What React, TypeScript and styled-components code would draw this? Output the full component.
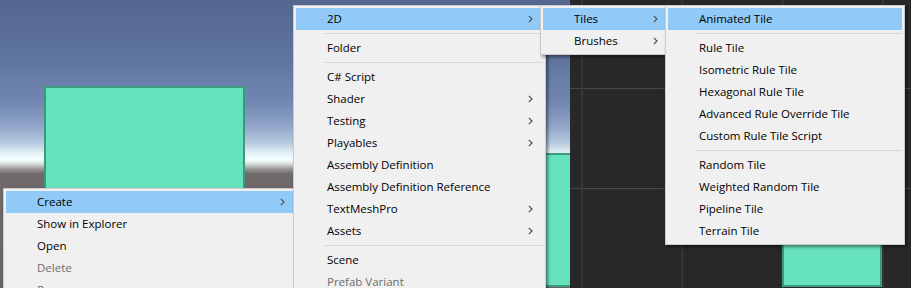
import React from "react";
import styled, { createGlobalStyle } from "styled-components";

const GlobalStyle = createGlobalStyle`
  html, body { margin: 0; padding: 0; background: #282828; }
  body { overflow: hidden; font-family: "Open Sans", "Liberation Sans", sans-serif; }
  * { box-sizing: border-box; }
`;

const Stage = styled.div`
  position: relative;
  width: 911px;
  height: 288px;
  display: flex;
  overflow: hidden;
`;

const SceneView = styled.div`
  position: relative;
  width: 570px;
  height: 288px;
  overflow: hidden;
  background: linear-gradient(
    to bottom,
    #536790 0px,
    #5d729a 50px,
    #7085b0 100px,
    #8ea3c6 125px,
    #b4c7dc 142px,
    #e6f4f8 154px,
    #f4ffff 160px,
    #d6dada 164px,
    #9a9796 169px,
    #6f6a69 174px,
    #6a6564 288px
  );
`;

const TileView = styled.div`
  position: relative;
  flex: 1;
  height: 288px;
  overflow: hidden;
  background-color: #282828;
  background-image:
    linear-gradient(to right, #363636 0, #363636 2px, transparent 2px),
    linear-gradient(to bottom, #474747 0, #474747 1px, transparent 1px);
  background-size: 100.3px 100px, 100px 100px;
  background-position: 11px 0, 0 88px;
`;

const GreenBox = styled.div<{ $x: number; $y: number; $w: number; $h: number }>`
  position: absolute;
  left: ${(p) => p.$x}px;
  top: ${(p) => p.$y}px;
  width: ${(p) => p.$w}px;
  height: ${(p) => p.$h}px;
  background: #67e2be;
  border: 2px solid #3c9a7b;
`;

const MenuPanel = styled.div<{ $x: number; $y: number; $w: number; $z: number }>`
  position: absolute;
  left: ${(p) => p.$x}px;
  top: ${(p) => p.$y}px;
  width: ${(p) => p.$w}px;
  z-index: ${(p) => p.$z};
  background: #f0f0f0;
  border: 1px solid #cbcbcb;
  padding: 2px;
  display: flex;
  flex-direction: column;
  box-shadow: 2px 2px 3px rgba(0, 0, 0, 0.45);
`;

const Row = styled.div<{ $active?: boolean; $disabled?: boolean }>`
  height: 22px;
  display: flex;
  align-items: center;
  padding: 0 10px 1px 31px;
  font-size: 11.5px;
  white-space: nowrap;
  color: ${(p) => (p.$disabled ? "#6d6d6d" : "#000000")};
  background: ${(p) => (p.$active ? "#91c9f7" : "transparent")};
`;

const Label = styled.span`
  flex: 1;
`;

const Sep = styled.div`
  height: 7px;
  display: flex;
  align-items: center;
  padding-left: 28px;
  &::after {
    content: "";
    flex: 1;
    height: 1px;
    background: #d7d7d7;
  }
`;

const Chevron = () => (
  <svg width="5" height="8" viewBox="0 0 5 8" aria-hidden>
    <polyline points="0.8,0.8 4,4 0.8,7.2" fill="none" stroke="#4a4a4a" strokeWidth="1.1" />
  </svg>
);

type Item =
  | { sep: true }
  | { label: string; sub?: boolean; active?: boolean; disabled?: boolean };

const Menu = ({ x, y, w, z, items }: { x: number; y: number; w: number; z: number; items: Item[] }) => (
  <MenuPanel $x={x} $y={y} $w={w} $z={z}>
    {items.map((it, i) =>
      "sep" in it ? (
        <Sep key={i} />
      ) : (
        <Row key={i} $active={it.active} $disabled={it.disabled}>
          <Label>{it.label}</Label>
          {it.sub && <Chevron />}
        </Row>
      )
    )}
  </MenuPanel>
);

const rootMenu: Item[] = [
  { label: "Create", sub: true, active: true },
  { label: "Show in Explorer" },
  { label: "Open" },
  { label: "Delete", disabled: true },
  { label: "Rename", disabled: true },
];

const createMenu: Item[] = [
  { label: "2D", sub: true, active: true },
  { sep: true },
  { label: "Folder" },
  { sep: true },
  { label: "C# Script" },
  { label: "Shader", sub: true },
  { label: "Testing", sub: true },
  { label: "Playables", sub: true },
  { label: "Assembly Definition" },
  { label: "Assembly Definition Reference" },
  { label: "TextMeshPro", sub: true },
  { label: "Assets", sub: true },
  { sep: true },
  { label: "Scene" },
  { label: "Prefab Variant", disabled: true },
];

const twoDMenu: Item[] = [
  { label: "Tiles", sub: true, active: true },
  { label: "Brushes", sub: true },
];

const tilesMenu: Item[] = [
  { label: "Animated Tile", active: true },
  { sep: true },
  { label: "Rule Tile" },
  { label: "Isometric Rule Tile" },
  { label: "Hexagonal Rule Tile" },
  { label: "Advanced Rule Override Tile" },
  { label: "Custom Rule Tile Script" },
  { sep: true },
  { label: "Random Tile" },
  { label: "Weighted Random Tile" },
  { label: "Pipeline Tile" },
  { label: "Terrain Tile" },
];

export default function App() {
  return (
    <>
      <GlobalStyle />
      <Stage>
        <SceneView>
          <GreenBox $x={44} $y={86} $w={201} $h={140} />
          <GreenBox $x={480} $y={153} $w={120} $h={134} />
        </SceneView>
        <TileView>
          <GreenBox $x={212} $y={150} $w={100} $h={137} />
        </TileView>
        <Menu x={3} y={188} w={295} z={1} items={rootMenu} />
        <Menu x={293} y={5} w={253} z={2} items={createMenu} />
        <Menu x={540} y={5} w={131} z={3} items={twoDMenu} />
        <Menu x={665} y={5} w={240} z={4} items={tilesMenu} />
      </Stage>
    </>
  );
}
